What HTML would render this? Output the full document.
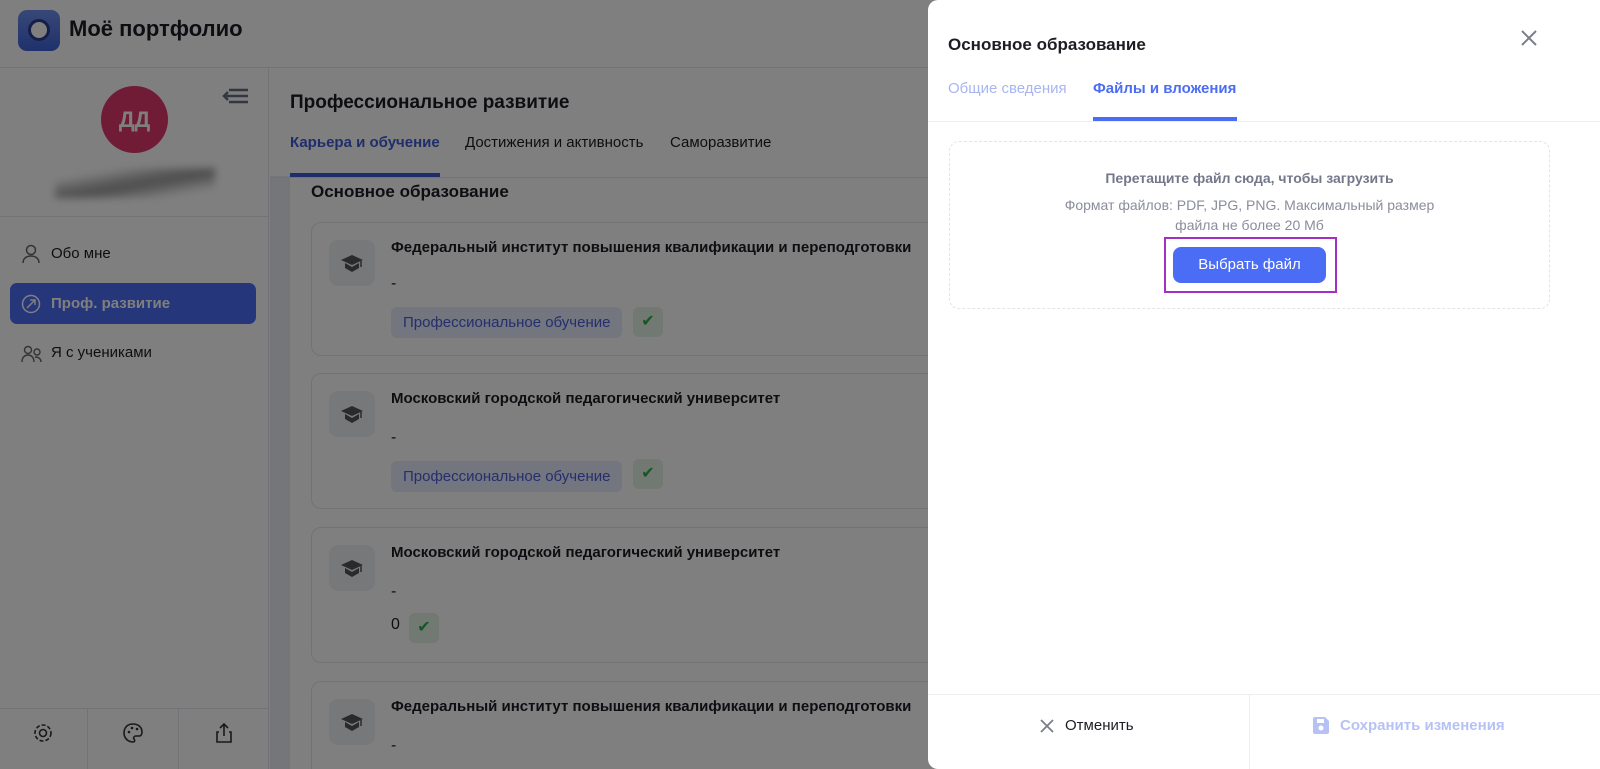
<!DOCTYPE html>
<html><head><meta charset="utf-8"><style>
*{box-sizing:border-box;margin:0;padding:0}
html{width:1600px;height:769px;overflow:hidden}
body{width:1600px;height:769px;overflow:hidden;font-family:"Liberation Sans","Noto Sans CJK SC",sans-serif;background:#fff;position:relative;color:#1d1d24}
.abs{position:absolute}
.hdr{left:0;top:0;width:1600px;height:68px;border-bottom:1px solid #e4e6ec;background:#fff}
.side{left:0;top:68px;width:269px;height:701px;border-right:1px solid #e4e6ec;background:#fff}
.card{left:311px;width:640px;border:1px solid #e3e5ea;border-radius:10px;background:#fff}
.ico{left:17px;top:17px;width:46px;height:46px;border-radius:9px;background:#eef0f4}
.ico svg{position:absolute;left:12px;top:13px}
.t{font-size:15px;font-weight:bold;left:79px;top:16px;white-space:nowrap}
.tag{background:#e6eaff;color:#4a5fd8;font-size:15px;padding:7px 12px;border-radius:6px}
.ok{width:30px;height:30px;border-radius:6px;background:#e2f3e4}
.ov{left:0;top:0;width:1600px;height:769px;background:rgba(0,0,0,0.5)}
.dr{left:928px;top:0;width:672px;height:769px;background:#fff;border-radius:10px 0 0 10px}
</style></head><body>
<div class="abs hdr">
 <div class="abs" style="left:18px;top:10px;width:42px;height:41px;border-radius:9px;background:linear-gradient(#6f8ff0,#3f63d8)"><div class="abs" style="left:10px;top:9px;width:22px;height:22px;border-radius:50%;background:#fff;border:3px solid #2b3f8f"></div></div>
 <div class="abs" style="left:69px;top:16px;font-size:22px;font-weight:bold">Моё портфолио</div>
</div>
<div class="abs side">
 <div class="abs" style="left:101px;top:18px;width:67px;height:67px;border-radius:50%;background:#e0386c;color:#fff;font-weight:bold;font-size:22px;text-align:center;line-height:67px">ДД</div>
 <svg class="abs" style="left:222px;top:20px" width="28" height="16"><path d="M7 2H26M2 8H26M7 14H26M6 4L2 8L6 12" stroke="#6a6e80" stroke-width="2.5" fill="none"/></svg>
 <div class="abs" style="left:55px;top:100px;width:160px;height:30px;background:linear-gradient(170deg,#fff 20%,#bbb 40%,#999 55%,#ccc 70%,#fff 85%);filter:blur(4px)"></div>
 <div class="abs" style="left:0;top:148px;width:269px;border-top:1px solid #e4e6ec"></div>
 <svg class="abs" style="left:21px;top:176px" width="20" height="20"><circle cx="10" cy="6" r="4.5" stroke="#666" stroke-width="1.5" fill="none"/><path d="M2 19C2 14 6 12 10 12S18 14 18 19" stroke="#666" stroke-width="1.5" fill="none"/></svg>
 <div class="abs" style="left:51px;top:177px;font-size:15px">Обо мне</div>
 <div class="abs" style="left:10px;top:215px;width:246px;height:41px;border-radius:7px;background:#4b6cf5"></div>
 <svg class="abs" style="left:21px;top:226px" width="20" height="20"><circle cx="10" cy="10" r="8.5" stroke="#fff" stroke-width="1.5" fill="none"/><path d="M6 14L14 6M9 6H14V11" stroke="#fff" stroke-width="1.5" fill="none"/></svg>
 <div class="abs" style="left:51px;top:227px;font-size:15px;font-weight:bold;color:#fff">Проф. развитие</div>
 <svg class="abs" style="left:21px;top:276px" width="22" height="20"><circle cx="7" cy="6" r="3.5" stroke="#666" stroke-width="1.4" fill="none"/><circle cx="16" cy="8" r="3" stroke="#666" stroke-width="1.4" fill="none"/><path d="M1 18C1 13 4 11 7 11S13 13 13 18M14 13C18 13 20 15 20 18" stroke="#666" stroke-width="1.4" fill="none"/></svg>
 <div class="abs" style="left:51px;top:276px;font-size:15px">Я с учениками</div>
 <div class="abs" style="left:0;top:640px;width:269px;border-top:1px solid #e4e6ec"></div>
 <div class="abs" style="left:87px;top:640px;height:61px;border-left:1px solid #e4e6ec"></div>
 <div class="abs" style="left:178px;top:640px;height:61px;border-left:1px solid #e4e6ec"></div>
 <svg class="abs" style="left:32px;top:654px" width="22" height="22"><circle cx="11" cy="11" r="3.5" stroke="#333" stroke-width="1.6" fill="none"/><circle cx="11" cy="11" r="8" stroke="#333" stroke-width="1.6" fill="none" stroke-dasharray="4 2"/></svg>
 <svg class="abs" style="left:122px;top:654px" width="22" height="22"><path d="M11 2C5 2 2 6 2 11S6 20 11 20C13 20 13 18 12 17S12 14 14 14H17C19 14 20 12 20 10C20 5 16 2 11 2Z" stroke="#333" stroke-width="1.6" fill="none"/><circle cx="7" cy="10" r="1.3" fill="#333"/><circle cx="10" cy="6" r="1.3" fill="#333"/><circle cx="15" cy="7" r="1.3" fill="#333"/></svg>
 <svg class="abs" style="left:213px;top:653px" width="22" height="24"><path d="M11 15V3M7 7L11 3L15 7M6 11H4V21H18V11H16" stroke="#333" stroke-width="1.6" fill="none"/></svg>
</div>
<div class="abs" style="left:270px;top:176px;width:20px;height:593px;background:#e9ecf4"></div>
<div class="abs" style="left:290px;top:92px;font-size:19px;font-weight:bold">Профессиональное развитие</div>
<div class="abs" style="left:290px;top:134px;font-size:15px;color:#3f5bd6;font-weight:bold">Карьера и обучение</div>
<div class="abs" style="left:465px;top:134px;font-size:15px">Достижения и активность</div>
<div class="abs" style="left:670px;top:134px;font-size:15px">Саморазвитие</div>
<div class="abs" style="left:270px;top:177px;width:660px;border-top:1px solid #e4e6ec"></div>
<div class="abs" style="left:290px;top:173px;width:150px;height:4px;background:#3f5bd6"></div>
<div class="abs" style="left:311px;top:182px;font-size:17px;font-weight:bold">Основное образование</div>
<svg width="0" height="0" style="position:absolute"><defs><g id="cap"><path d="M11 2L0 7L11 12L22 7Z" fill="#555"/><path d="M4 10V15L11 19L18 15V10L11 14Z" fill="#555"/><path d="M20 8V14" stroke="#555" stroke-width="1.5"/></g></defs></svg>
<div class="abs card" style="top:222px;height:134px"><div class="abs ico"><svg width="22" height="20"><use href="#cap"/></svg></div><div class="abs t">Федеральный институт повышения квалификации и переподготовки</div><div class="abs" style="left:79px;top:52px">-</div><div class="abs tag" style="left:79px;top:84px">Профессиональное обучение</div><div class="abs ok" style="left:321px;top:84px;color:#2eaa4a;text-align:center;line-height:30px">✔</div></div>
<div class="abs card" style="top:373px;height:136px"><div class="abs ico"><svg width="22" height="20"><use href="#cap"/></svg></div><div class="abs t">Московский городской педагогический университет</div><div class="abs" style="left:79px;top:55px">-</div><div class="abs tag" style="left:79px;top:87px">Профессиональное обучение</div><div class="abs ok" style="left:321px;top:85px;color:#2eaa4a;text-align:center;line-height:30px">✔</div></div>
<div class="abs card" style="top:527px;height:136px"><div class="abs ico"><svg width="22" height="20"><use href="#cap"/></svg></div><div class="abs t">Московский городской педагогический университет</div><div class="abs" style="left:79px;top:55px">-</div><div class="abs" style="left:79px;top:88px;font-size:16px">0</div><div class="abs ok" style="left:97px;top:85px;color:#2eaa4a;text-align:center;line-height:30px">✔</div></div>
<div class="abs card" style="top:681px;height:88px;border-bottom:none;border-radius:10px 10px 0 0"><div class="abs ico"><svg width="22" height="20"><use href="#cap"/></svg></div><div class="abs t">Федеральный институт повышения квалификации и переподготовки</div><div class="abs" style="left:79px;top:55px">-</div></div>
<div class="abs ov"></div>
<div class="abs dr">
 <div class="abs" style="left:20px;top:35px;font-size:17px;font-weight:bold">Основное образование</div>
 <svg class="abs" style="left:592px;top:29px" width="18" height="18"><path d="M2 2L16 16M16 2L2 16" stroke="#7a7d8c" stroke-width="2"/></svg>
 <div class="abs" style="left:20px;top:80px;font-size:15px;color:#a8b5f2">Общие сведения</div>
 <div class="abs" style="left:165px;top:80px;font-size:15px;color:#4b6cf5;font-weight:bold">Файлы и вложения</div>
 <div class="abs" style="left:0;top:121px;width:672px;border-top:1px solid #eceef2"></div>
 <div class="abs" style="left:165px;top:117px;width:144px;height:4px;background:#4b6cf5"></div>
 <div class="abs" style="left:21px;top:141px;width:601px;height:168px;border:1.5px dashed #e2e4ea;border-radius:10px"></div>
 <div class="abs" style="left:0;top:170px;width:643px;text-align:center;font-size:14px;font-weight:bold;color:#74778a">Перетащите файл сюда, чтобы загрузить</div>
 <div class="abs" style="left:0;top:195px;width:643px;text-align:center;font-size:14px;color:#8a8d9c;line-height:20px">Формат файлов: PDF, JPG, PNG. Максимальный размер<br>файла не более 20 Мб</div>
 <div class="abs" style="left:236px;top:237px;width:173px;height:56px;border:2px solid #a230c2"></div>
 <div class="abs" style="left:245px;top:247px;width:153px;height:36px;border-radius:8px;background:#4b6cf5;color:#fff;font-size:15px;text-align:center;line-height:36px">Выбрать файл</div>
 <div class="abs" style="left:0;top:694px;width:672px;border-top:1px solid #eceef2"></div>
 <div class="abs" style="left:321px;top:694px;height:75px;border-left:1px solid #eceef2"></div>
 <svg class="abs" style="left:112px;top:719px" width="14" height="14"><path d="M1 1L13 13M13 1L1 13" stroke="#7a7d8c" stroke-width="1.8"/></svg>
 <div class="abs" style="left:137px;top:717px;font-size:15px">Отменить</div>
 <svg class="abs" style="left:385px;top:717px" width="16" height="17"><path d="M0 2Q0 0 2 0H12L16 4V15Q16 17 14 17H2Q0 17 0 15Z" fill="#b6c2f6"/><rect x="4" y="2" width="7" height="4" fill="#fff"/><circle cx="8" cy="11" r="2.5" fill="#fff"/></svg>
 <div class="abs" style="left:412px;top:717px;font-size:15px;font-weight:bold;color:#b6c2f6">Сохранить изменения</div>
</div>
</body></html>
